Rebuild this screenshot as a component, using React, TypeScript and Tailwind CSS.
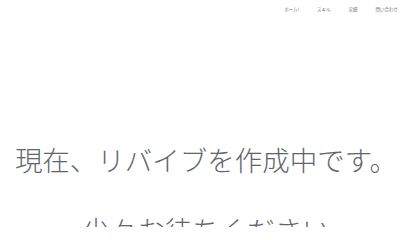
const NAV = ['ホーム!', 'スキル', '実績', '問い合わせ'];

export default function App() {
  return (
    <div
      className="w-[412px] h-[227px] overflow-hidden bg-white text-[#5f666c]"
      style={{ fontFamily: '"Noto Sans CJK JP", "Noto Sans", sans-serif' }}
    >
      {/* Header */}
      <nav className="flex justify-end items-center gap-[18px] pr-[14px] pt-[5px] h-[14px] text-[4.5px] text-[#777]">
        {NAV.map((n) => (
          <span key={n}>{n}</span>
        ))}
      </nav>

      {/* Main */}
      <main className="text-center">
        <h1 className="mt-[128px] text-[27.5px] leading-[34px] font-light">現在、リバイブを作成中です。</h1>
        <p className="mt-[36px] text-[27.5px] leading-[34px] font-light">少々お待ちください</p>
      </main>
    </div>
  );
}
